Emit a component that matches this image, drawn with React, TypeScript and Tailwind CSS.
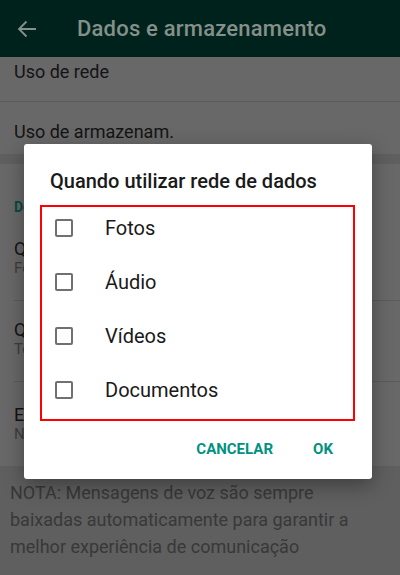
import React from "react";

const items = ["Fotos", "Áudio", "Vídeos", "Documentos"];

export default function App() {
  return (
    <div
      className="relative w-[400px] h-[575px] overflow-hidden bg-[#686868]"
      style={{ fontFamily: "Roboto, 'Noto Sans', sans-serif" }}
    >
      {/* Header */}
      <div className="h-[57px] bg-[#00221c] flex items-center">
        <svg className="ml-[17px] w-[20px] h-[20px]" viewBox="0 0 20 20" fill="none" stroke="#85908b" strokeWidth="1.8">
          <path d="M19 10H2M9.5 2.5L2 10l7.5 7.5" />
        </svg>
        <span className="ml-[40px] text-[22px] font-medium text-[#85908b] tracking-[0.2px]">Dados e armazenamento</span>
      </div>

      {/* Section 1 */}
      <div className="h-[45px] border-b border-[#5b5b5b] pl-[14px] pt-[5px]">
        <div className="text-[18px] leading-[20px] text-[#141414]">Uso de rede</div>
      </div>
      <div className="h-[52px] pl-[14px] pt-[20px]">
        <div className="text-[18px] leading-[20px] text-[#141414]">Uso de armazenam.</div>
      </div>
      <div className="h-[10px] bg-[#5f5f5f]" />

      {/* Section 2 */}
      <div className="pl-[14px]">
        <div className="pt-[35px] h-[60px] text-[14px] leading-[16px] font-bold text-[#0a4a3e]">Download automático de mídia</div>
        <div className="h-[77px] border-b border-[#5b5b5b] pt-[15px]">
          <div className="text-[18px] leading-[20px] text-[#141414] whitespace-nowrap">Quando utilizar rede de dados</div>
          <div className="text-[15px] leading-[18px] text-[#3d3d3d] whitespace-nowrap">Fotos</div>
        </div>
        <div className="h-[81px] border-b border-[#5b5b5b] pt-[19px]">
          <div className="text-[18px] leading-[20px] text-[#141414] whitespace-nowrap">Quando conectado em Wi-Fi</div>
          <div className="text-[15px] leading-[18px] text-[#3d3d3d] whitespace-nowrap">Todas as mídias</div>
        </div>
        <div className="h-[84px] pt-[23px]">
          <div className="text-[18px] leading-[20px] text-[#141414] whitespace-nowrap">Em roaming</div>
          <div className="text-[15px] leading-[18px] text-[#3d3d3d] whitespace-nowrap">Nenhuma mídia</div>
        </div>
      </div>

      {/* Note */}
      <div className="bg-[#5f5f5f] h-[110px] pl-[10px] pr-[30px] pt-[13px] border-b border-[#575757]">
        <p className="text-[18px] leading-[27px] text-[#383838]">
          NOTA: Mensagens de voz são sempre baixadas automaticamente para garantir a melhor experiência de comunicação
        </p>
      </div>

      {/* Dialog */}
      <div className="absolute left-[24px] top-[144px] w-[348px] h-[335px] bg-white rounded-[3px] shadow-[0_6px_20px_rgba(0,0,0,0.35)] flex flex-col">
        <div className="pt-[25px] pl-[26px] text-[20px] leading-[24px] font-medium text-[#1a1a1a]">
          Quando utilizar rede de dados
        </div>
        <div className="relative mt-[8px]">
          {items.map((t) => (
            <div key={t} className="h-[54px] flex items-center pl-[31px]">
              <div className="w-[18px] h-[18px] border-2 border-[#707070] rounded-[2px]" />
              <span className="ml-[32px] text-[20px] text-[#1a1a1a]">{t}</span>
            </div>
          ))}
          <div className="absolute left-[16px] top-[4px] w-[315px] h-[216px] border-2 border-[#ff0000]" />
        </div>
        <div className="mt-[14px] flex justify-end pr-[17px] gap-[10px]">
          <button className="h-[36px] min-w-[64px] px-[8px] text-[15px] font-bold text-[#00927f]">CANCELAR</button>
          <button className="h-[36px] min-w-[64px] px-[8px] text-[15px] font-bold text-[#00927f]">OK</button>
        </div>
      </div>
    </div>
  );
}
